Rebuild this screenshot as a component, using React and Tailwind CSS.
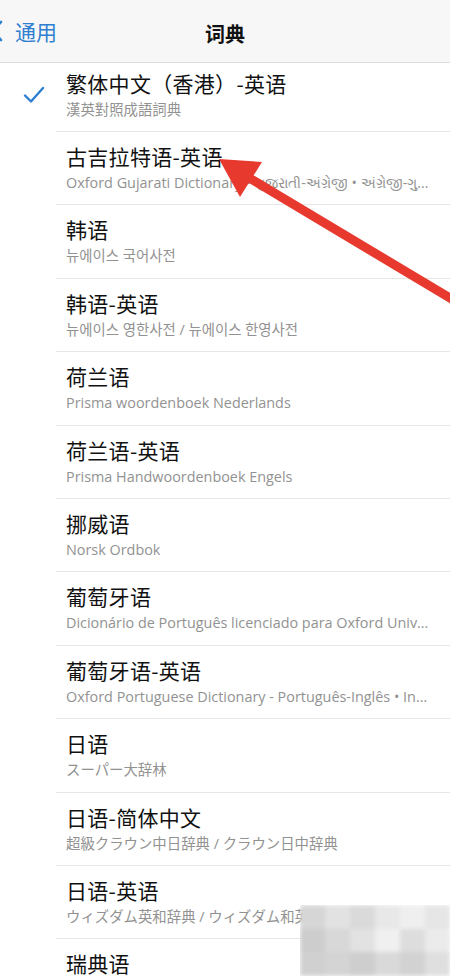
import React from 'react';

const rows = [
  { title: '繁体中文（香港）-英语', sub: '漢英對照成語詞典', checked: true, lang: 'tc' },
  { title: '古吉拉特语-英语', sub: 'Oxford Gujarati Dictionary • ગુજરાતી-અંગ્રેજી • અંગ્રેજી-ગુજરાતી' },
  { title: '韩语', sub: '뉴에이스 국어사전', lang: 'kr' },
  { title: '韩语-英语', sub: '뉴에이스 영한사전 / 뉴에이스 한영사전', lang: 'kr' },
  { title: '荷兰语', sub: 'Prisma woordenboek Nederlands' },
  { title: '荷兰语-英语', sub: 'Prisma Handwoordenboek Engels' },
  { title: '挪威语', sub: 'Norsk Ordbok' },
  { title: '葡萄牙语', sub: 'Dicionário de Português licenciado para Oxford University Press' },
  { title: '葡萄牙语-英语', sub: 'Oxford Portuguese Dictionary - Português-Inglês • Inglês-Português' },
  { title: '日语', sub: 'スーパー大辞林', lang: 'jp' },
  { title: '日语-简体中文', sub: '超級クラウン中日辞典 / クラウン日中辞典', lang: 'jp' },
  { title: '日语-英语', sub: 'ウィズダム英和辞典 / ウィズダム和英辞典', lang: 'jp' },
  { title: '瑞典语', sub: 'Svensk ordbok' },
];

const subFont = {
  tc: "font-['Open_Sans','Noto_Sans_CJK_TC',sans-serif]",
  kr: "font-['Open_Sans','Noto_Sans_CJK_KR',sans-serif]",
  jp: "font-['Open_Sans','Noto_Sans_CJK_JP',sans-serif]",
};

const Row = ({ item, first }) => (
  <div className={`relative flex ${first ? 'h-[69px] pt-[6px]' : 'h-[73.4px] pt-[10px]'}`}>
    <div className="w-[66px] shrink-0 flex justify-center">
      {item.checked && (
        <svg width="22" height="18" viewBox="0 0 22 18" className="ml-[2px] mt-[17px]">
          <path d="M2 9.5 L8 15.5 L20 2" fill="none" stroke="#2f7fd0" strokeWidth="2.4" strokeLinecap="round" strokeLinejoin="round" />
        </svg>
      )}
    </div>
    <div className="min-w-0 flex-1 pr-[18px]">
      <div className="text-[21px] leading-[28px] tracking-[0.3px] text-[#111] font-['Noto_Sans_CJK_SC',sans-serif]">{item.title}</div>
      <div className={`mt-[3px] text-[14.4px] leading-[19px] text-[#929292] truncate ${subFont[item.lang] || "font-['Open_Sans','Noto_Sans_CJK_SC',sans-serif]"}`}>
        {item.sub}
      </div>
    </div>
    <div className="absolute bottom-0 left-[56px] right-0 h-px bg-[#e6e6e6]" />
  </div>
);

export default function App() {
  return (
    <div className="relative w-[450px] h-[976px] overflow-hidden bg-white">
      {/* Nav bar */}
      <div className="relative z-10 h-[63px] bg-[#f7f7f7] border-b border-[#dcdcdc] flex items-center">
        <div className="flex items-center">
          <svg width="12" height="22" viewBox="0 0 12 22" className="ml-[-9px]">
            <path d="M10 2 L2 11 L10 20" fill="none" stroke="#2f7fd0" strokeWidth="2.6" strokeLinecap="round" strokeLinejoin="round" />
          </svg>
          <span className="ml-[12px] text-[21px] leading-none text-[#2f7fd0] font-['Noto_Sans_CJK_SC',sans-serif]">通用</span>
        </div>
        <div className="absolute left-0 right-0 top-[20px] text-center text-[20px] leading-[28px] font-bold text-[#111] font-['Noto_Sans_CJK_SC',sans-serif]">
          词典
        </div>
      </div>

      {/* List */}
      <div>
        {rows.map((item, i) => (
          <Row key={item.title} item={item} first={i === 0} />
        ))}
      </div>

      {/* Red annotation arrow */}
      <svg className="absolute inset-0 pointer-events-none" width="450" height="976" viewBox="0 0 450 976">
        <line x1="246" y1="176" x2="470" y2="310" stroke="#e8392f" strokeWidth="9" />
        <polygon points="219,159 262,162 240,197" fill="#e8392f" />
      </svg>

      {/* Pixelated watermark */}
      <div className="absolute left-[300px] top-[905px] w-[150px] h-[71px] overflow-hidden">
        <div className="w-full h-full grid grid-cols-6 grid-rows-3 blur-[2px]">
          <div className="bg-[#d6d6d6]" />
          <div className="bg-[#e2e2e2]" />
          <div className="bg-[#dadada]" />
          <div className="bg-[#e8e8e8]" />
          <div className="bg-[#efefef]" />
          <div className="bg-[#e6e6e6]" />
          <div className="bg-[#cdcdcd]" />
          <div className="bg-[#d8d8d8]" />
          <div className="bg-[#e2e2e2]" />
          <div className="bg-[#f0f0f0]" />
          <div className="bg-[#dddddd]" />
          <div className="bg-[#ebebeb]" />
          <div className="bg-[#d0d0d0]" />
          <div className="bg-[#d4d4d4]" />
          <div className="bg-[#cecece]" />
          <div className="bg-[#d9d9d9]" />
          <div className="bg-[#d2d2d2]" />
          <div className="bg-[#dfdfdf]" />
        </div>
      </div>
    </div>
  );
}
